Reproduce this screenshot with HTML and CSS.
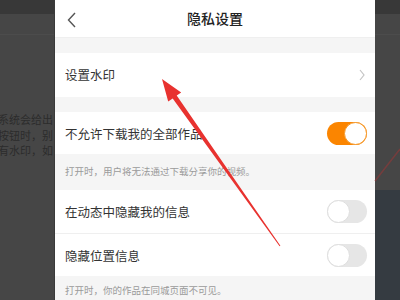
FILE: index.html
```html
<!DOCTYPE html>
<html lang="zh-CN">
<head>
    <meta charset="UTF-8">
    <title>隐私设置</title>
    <link rel="stylesheet" href="styles.css">
</head>
<body>
    <div class="screen">
        <div class="backdrop backdrop-left">
            <div class="backdrop-top"></div>
            <div class="backdrop-line"></div>
            <div class="backdrop-text">
                <p>系统会给出</p>
                <p>按钮时，别</p>
                <p>有水印，如</p>
            </div>
        </div>

        <div class="panel">
            <header class="nav">
                <svg class="nav-back" width="10" height="16" viewBox="0 0 10 16">
                    <polyline points="8,1 1.5,8 8,15" fill="none" stroke="#555" stroke-width="1.4"/>
                </svg>
                <h1>隐私设置</h1>
            </header>

            <div class="gap"></div>
            <div class="row row-link">
                <span>设置水印</span>
                <svg width="6" height="12" viewBox="0 0 6 12">
                    <polyline points="1,1 5,6 1,11" fill="none" stroke="#c4c4c4" stroke-width="1.2"/>
                </svg>
            </div>

            <div class="gap"></div>
            <div class="row">
                <span>不允许下载我的全部作品</span>
                <div class="toggle on"><div class="knob"></div></div>
            </div>
            <p class="hint hint-tall">打开时，用户将无法通过下载分享你的视频。</p>

            <div class="row">
                <span>在动态中隐藏我的信息</span>
                <div class="toggle"><div class="knob"></div></div>
            </div>
            <div class="row row-divided">
                <span>隐藏位置信息</span>
                <div class="toggle"><div class="knob"></div></div>
            </div>
            <p class="hint">打开时，你的作品在同城页面不可见。</p>
        </div>

        <div class="backdrop backdrop-right">
            <div class="backdrop-top"></div>
            <div class="backdrop-line"></div>
            <div class="backdrop-mid"></div>
            <div class="backdrop-low"></div>
        </div>

        <svg class="arrow" width="400" height="300" viewBox="0 0 400 300">
            <line x1="375" y1="181" x2="400" y2="149" stroke="#8a3a3a" stroke-width="1.5" opacity="0.7"/>
            <polygon fill="#e8322f"
                points="162,79 181.2,92.4 176.7,95.6 280.4,245.7 279.6,246.3 172.7,98.4 168.2,101.6"/>
        </svg>
    </div>
</body>
</html>
```

FILE: styles.css
```css
* {
    box-sizing: border-box;
}

body {
    margin: 0;
    font-family: "Noto Sans CJK SC", "Noto Sans", sans-serif;
    color: #333;
}

.screen {
    position: relative;
    display: flex;
    width: 400px;
    height: 300px;
    overflow: hidden;
}

.backdrop {
    display: flex;
    flex-direction: column;
    background: #464646;
    overflow: hidden;
}

.backdrop-left {
    width: 55px;
    border-right: 1px solid #3a3a3a;
}

.backdrop-right {
    flex: 1;
}

.backdrop-top {
    height: 14px;
    background: #383838;
}

.backdrop-line {
    height: 1px;
    margin-top: 20px;
    background: #4c4c4c;
}

.backdrop-text {
    margin-top: 77px;
    margin-left: -2px;
    font-size: 11px;
    line-height: 15.5px;
    color: #2c2c2c;
    white-space: nowrap;
}

.backdrop-text p {
    margin: 0;
}

.backdrop-mid {
    height: 155px;
}

.backdrop-low {
    flex: 1;
    background: #353b41;
}

.panel {
    width: 320px;
    flex: none;
    background: #f5f5f5;
    display: flex;
    flex-direction: column;
}

.nav {
    position: relative;
    height: 38px;
    background: #fff;
    display: flex;
    align-items: center;
    justify-content: center;
    border-bottom: 1px solid #efefef;
}

.nav-back {
    position: absolute;
    left: 12px;
    top: 12px;
}

.nav h1 {
    margin: 0;
    font-size: 14px;
    font-weight: 500;
    color: #222;
}

.gap {
    height: 15px;
}

.row {
    display: flex;
    align-items: center;
    justify-content: space-between;
    height: 43px;
    padding: 0 8px 0 10px;
    background: #fff;
    font-size: 12.5px;
}

.row-link {
    height: 44px;
    padding-right: 10px;
}

.row-divided {
    border-top: 1px solid #efefef;
}

.toggle {
    position: relative;
    width: 40px;
    height: 23px;
    border-radius: 12px;
    background: #e6e6e6;
}

.knob {
    position: absolute;
    top: 0;
    left: 0;
    width: 23px;
    height: 23px;
    border-radius: 50%;
    background: #fff;
    border: 1px solid #dedede;
}

.toggle.on {
    background: #fb8500;
}

.toggle.on .knob {
    left: auto;
    right: 0;
    border-color: #f59a2c;
}

.hint {
    margin: 0;
    padding: 7px 10px 0;
    height: 24px;
    font-size: 9.5px;
    color: #9a9a9a;
}

.hint-tall {
    height: 36px;
    padding-top: 10px;
}

.arrow {
    position: absolute;
    top: 0;
    left: 0;
    pointer-events: none;
}
```
